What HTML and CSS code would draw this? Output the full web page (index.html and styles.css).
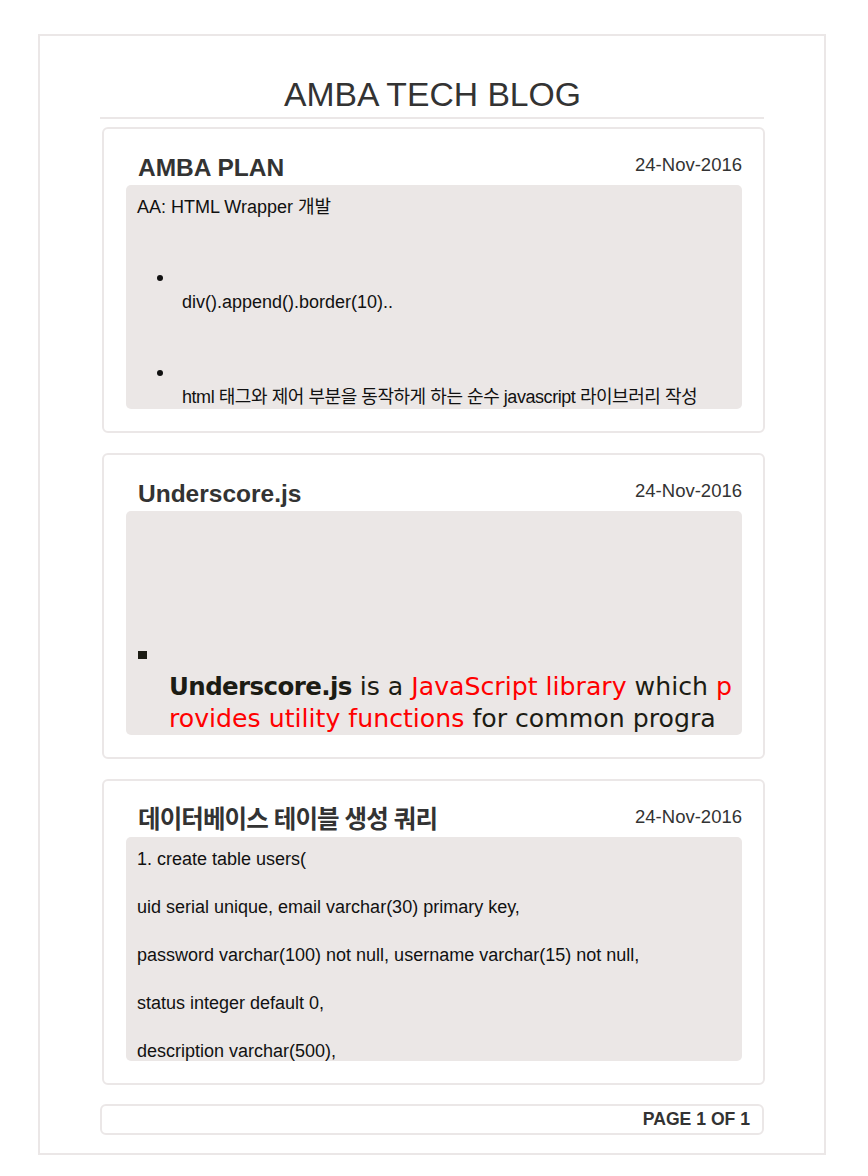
FILE: index.html
```html
<!DOCTYPE html>
<html lang="ko">
<head>
<meta charset="utf-8">
<title>AMBA TECH BLOG</title>
<link rel="stylesheet" href="styles.css">
</head>
<body>
<div class="page">
  <h1 class="blog-title">AMBA TECH BLOG</h1>
  <hr class="title-rule">
  <main class="posts">
    <article class="post">
      <header class="post-head">
        <h2 class="post-title">AMBA PLAN</h2>
        <span class="post-date">24-Nov-2016</span>
      </header>
      <div class="post-body body-plan">
        <p class="line">AA: HTML Wrapper 개발</p>
        <ul class="dots">
          <li><p>div().append().border(10)..</p></li>
          <li><p class="tight">html 태그와 제어 부분을 동작하게 하는 순수 javascript 라이브러리 작성</p></li>
        </ul>
      </div>
    </article>
    <article class="post">
      <header class="post-head">
        <h2 class="post-title">Underscore.js</h2>
        <span class="post-date">24-Nov-2016</span>
      </header>
      <div class="post-body body-us">
        <ul class="squares">
          <li><p><b>Underscore.js</b> is a <span class="red">JavaScript library</span> which <span class="red">provides utility functions</span> for common programming tasks.</p></li>
        </ul>
      </div>
    </article>
    <article class="post">
      <header class="post-head">
        <h2 class="post-title post-title-ko">데이터베이스 테이블 생성 쿼리</h2>
        <span class="post-date">24-Nov-2016</span>
      </header>
      <div class="post-body body-sql">
        <p class="line">1. create table users(</p>
        <p class="line">uid serial unique, email varchar(30) primary key,</p>
        <p class="line">password varchar(100) not null, username varchar(15) not null,</p>
        <p class="line">status integer default 0,</p>
        <p class="line">description varchar(500),</p>
      </div>
    </article>
  </main>
  <footer class="pager">PAGE 1 OF 1</footer>
</div>
</body>
</html>
```
FILE: styles.css
```css
html, body {
  margin: 0;
  padding: 0;
  background: #ffffff;
}
body {
  font-family: "Liberation Sans", Arial, "Noto Sans CJK KR", sans-serif;
  color: #111;
}
.page {
  margin: 34px 0 0 38px;
  width: 665px;
  padding: 39px 59px 18px 60px;
  border: 2px solid #ebe7e7;
}
.blog-title {
  margin: 0;
  font-size: 33.7px;
  line-height: 38px;
  font-weight: normal;
  color: #333;
  text-align: center;
}
.title-rule {
  margin: 4px 1px 0 0;
  height: 0;
  border: 0;
  border-top: 2px solid #ebe7e7;
}
.posts {
  display: flex;
  flex-direction: column;
  gap: 20px;
  margin-top: 8px;
}
.post {
  margin-left: 2px;
  padding: 25px 21px 22px 22px;
  border: 2px solid #ebe7e7;
  border-radius: 6px;
}
.post-head {
  display: flex;
  justify-content: space-between;
  align-items: flex-start;
  height: 28px;
  margin-bottom: 3px;
}
.post-title {
  margin: 0;
  padding-left: 12px;
  font-size: 24.5px;
  line-height: 28px;
  font-weight: bold;
  color: #333;
}
.post-title-ko {
  letter-spacing: -0.9px;
}
.post-date {
  font-size: 18.5px;
  line-height: 21px;
  color: #333;
}
.post-body {
  height: 224px;
  overflow: hidden;
  background: #ebe7e6;
  border-radius: 5px;
  box-sizing: border-box;
  padding: 12px 8px 0 11px;
  font-size: 18px;
  line-height: 20px;
}
.post-body p {
  margin: 0;
}
.line {
  color: #111;
}
.tight {
  letter-spacing: -0.45px;
}
.dots {
  list-style: none;
  margin: 0;
  padding: 58px 0 0 45px;
}
.dots li + li {
  padding-top: 58px;
}
.dots li::before {
  content: "";
  display: block;
  width: 6px;
  height: 6px;
  margin-left: -25px;
  border-radius: 50%;
  background: #111;
}
.dots li p {
  padding-top: 11px;
}
.body-us {
  padding: 0 6px 0 12px;
}
.squares {
  list-style: none;
  margin: 0;
  padding: 140px 0 0;
}
.squares li::before {
  content: "";
  display: block;
  width: 9px;
  height: 8px;
  background: #1c1c14;
}
.squares li p {
  padding: 12px 0 0 31px;
  font-family: "DejaVu Sans", "Noto Sans", sans-serif;
  font-size: 25.2px;
  line-height: 32px;
  color: #1c1c14;
  word-break: break-all;
}
.squares b {
  font-weight: bold;
  font-size: 24.5px;
  letter-spacing: -0.6px;
}
.red {
  color: #ff0000;
}
.body-sql .line {
  margin-bottom: 28px;
}
.pager {
  margin: 19px 1px 0 0;
  height: 27px;
  padding-right: 12px;
  border: 2px solid #ebe7e7;
  border-radius: 6px;
  text-align: right;
  font-size: 17.6px;
  line-height: 27px;
  font-weight: bold;
  color: #333;
}
```
